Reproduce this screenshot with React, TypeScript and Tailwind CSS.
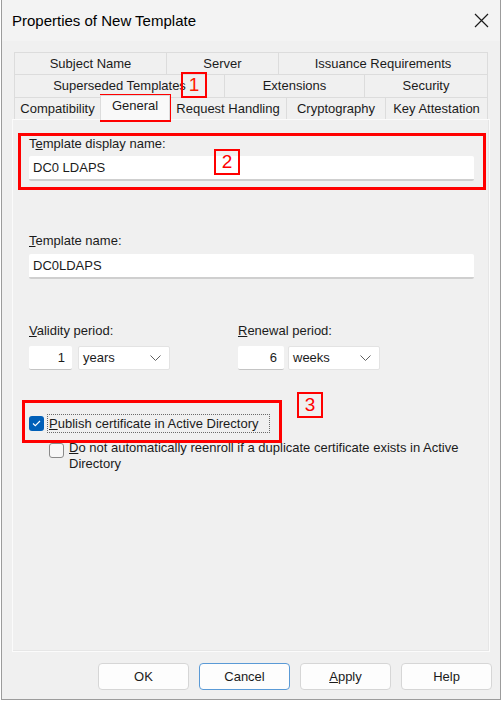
import React from "react";

const row1 = [
  { label: "Subject Name", w: "w-[153px]" },
  { label: "Server", w: "w-[112px]" },
  { label: "Issuance Requirements", w: "w-[209px]" },
];
const row2 = [
  { label: "Superseded Templates", w: "w-[211px]" },
  { label: "Extensions", w: "w-[140px]" },
  { label: "Security", w: "w-[123px]" },
];

function Chevron() {
  return (
    <svg width="11" height="7" viewBox="0 0 11 7" className="shrink-0">
      <polyline points="0.5,0.5 5.5,5.5 10.5,0.5" fill="none" stroke="#5f5f5f" strokeWidth="1" />
    </svg>
  );
}

function Spin({ value, w }: { value: string; w: string }) {
  return (
    <div className={`${w} h-[24px] bg-white rounded-[2px] border-b border-[#c4c4c4] flex items-center justify-end pr-[7px]`}>
      {value}
    </div>
  );
}

function Select({ value }: { value: string }) {
  return (
    <div className="w-[92px] h-[24px] bg-white rounded-[2px] border border-[#e3e3e3] flex items-center justify-between pl-[4px] pr-[8px]">
      <span>{value}</span>
      <Chevron />
    </div>
  );
}

function TextBox({ value }: { value: string }) {
  return (
    <div className="w-[445px] h-[25px] bg-white rounded-[2px] border-b-2 border-[#cfcfcf] flex items-center pl-[4px]">
      {value}
    </div>
  );
}

export default function App() {
  return (
    <div className="relative w-[502px] h-[702px] bg-white font-['Liberation_Sans',Arial,sans-serif] text-[13px] text-[#1b1b1b] leading-4">
      <div className="ml-px w-[500px] h-[700px] bg-[#f0f0f0] border-x border-b border-[#9c9c9c] flex flex-col">
        {/* Title bar */}
        <div className="h-[41px] flex items-center justify-between pl-[10px] pr-[11px] bg-[#f3f3f3]">
          <span className="text-[15px] text-black">Properties of New Template</span>
          <svg width="15" height="15" viewBox="0 0 15 15">
            <path d="M1 1 L14 14 M14 1 L1 14" stroke="#1a1a1a" strokeWidth="1.2" />
          </svg>
        </div>

        {/* Tabs */}
        <div className="mt-[11px] ml-[12px] w-[474px] flex flex-col">
          <div className="flex h-[22px]">
            {row1.map((t) => (
              <div key={t.label} className={`${t.w} border-t border-r first:border-l border-[#dcdcdc] flex items-center justify-center`}>
                {t.label}
              </div>
            ))}
          </div>
          <div className="flex h-[23px]">
            {row2.map((t) => (
              <div key={t.label} className={`${t.w} border-t border-r first:border-l border-[#dcdcdc] flex items-center justify-center`}>
                {t.label}
              </div>
            ))}
          </div>
          <div className="flex h-[22px] items-end">
            <div className="w-[86px] h-[22px] border-t border-l border-[#dcdcdc] flex items-center justify-center">Compatibility</div>
            <div className="w-[70px] h-[25px] -mb-px z-10 bg-[#f9f9f9] border-t border-x border-[#dcdcdc] flex items-start justify-center pt-[2px]">General</div>
            <div className="w-[117px] h-[22px] border-t border-r border-[#dcdcdc] flex items-center justify-center">Request Handling</div>
            <div className="w-[99px] h-[22px] border-t border-r border-[#dcdcdc] flex items-center justify-center">Cryptography</div>
            <div className="w-[102px] h-[22px] border-t border-r border-[#dcdcdc] flex items-center justify-center">Key Attestation</div>
          </div>
        </div>

        {/* Panel */}
        <div className="ml-[10px] w-[478px] h-[533px] border border-[#fbfbfb] shadow-[inset_-1px_-1px_0_#e6e6e6] pl-[16px] pt-[16px] flex flex-col">
          <div>
            T<span className="underline">e</span>mplate display name:
          </div>
          <div className="mt-[4px]">
            <TextBox value="DC0 LDAPS" />
          </div>

          <div className="mt-[52px]">
            <span className="underline">T</span>emplate name:
          </div>
          <div className="mt-[5px]">
            <TextBox value="DC0LDAPS" />
          </div>

          <div className="mt-[44px] flex">
            <div className="w-[209px] flex flex-col gap-[7px]">
              <div>
                <span className="underline">V</span>alidity period:
              </div>
              <div className="flex gap-[6px]">
                <Spin value="1" w="w-[43px]" />
                <Select value="years" />
              </div>
            </div>
            <div className="flex flex-col gap-[7px]">
              <div>
                <span className="underline">R</span>enewal period:
              </div>
              <div className="flex gap-[4px]">
                <Spin value="6" w="w-[46px]" />
                <Select value="weeks" />
              </div>
            </div>
          </div>

          <div className="mt-[44px] h-[19px] flex items-center">
            <div className="w-[15px] h-[15px] rounded-[3px] bg-[#005fb8] flex items-center justify-center">
              <svg width="9" height="7" viewBox="0 0 9 7">
                <polyline points="1,3.5 3.3,5.7 8,1" fill="none" stroke="white" strokeWidth="1.1" />
              </svg>
            </div>
            <div className="ml-[3px] h-[19px] w-[223px] border border-dotted border-[#6a6a6a] flex items-center pl-px">
              <span className="underline">P</span>ublish certificate in Active Directory
            </div>
          </div>

          <div className="mt-[7px] ml-[20px] flex">
            <div className="mt-[3px] w-[15px] h-[15px] rounded-[3px] border border-[#8a8a8a] bg-[#f7f7f7] shrink-0" />
            <div className="ml-[5px] w-[400px]">
              <span className="underline">D</span>o not automatically reenroll if a duplicate certificate exists in Active Directory
            </div>
          </div>
        </div>

        {/* Buttons */}
        <div className="mt-[11px] flex justify-end gap-[10px] pr-[8px]">
          <button className="w-[91px] h-[27px] bg-[#fdfdfd] border border-[#d6d6d6] rounded-[4px]">OK</button>
          <button className="w-[91px] h-[27px] bg-[#fdfdfd] border border-[#5a9ad6] rounded-[4px]">Cancel</button>
          <button className="w-[91px] h-[27px] bg-[#fdfdfd] border border-[#d6d6d6] rounded-[4px]">
            <span className="underline">A</span>pply
          </button>
          <button className="w-[91px] h-[27px] bg-[#fdfdfd] border border-[#d6d6d6] rounded-[4px]">Help</button>
        </div>
      </div>

      {/* Red annotations */}
      <div className="absolute left-[100px] top-[94px] w-[71px] h-[28px] border-[3px] border-[#ff0000]" />
      <div className="absolute left-[181px] top-[72px] w-[26px] h-[26px] border-2 border-[#ff0000] flex items-center justify-center text-[19px] text-[#ff1a00]">1</div>
      <div className="absolute left-[18px] top-[133px] w-[468px] h-[57px] border-[3px] border-[#ff0000]" />
      <div className="absolute left-[214px] top-[149px] w-[26px] h-[26px] border-2 border-[#ff0000] flex items-center justify-center text-[19px] text-[#ff0000]">2</div>
      <div className="absolute left-[22px] top-[400px] w-[260px] h-[43px] border-[3px] border-[#ff0000]" />
      <div className="absolute left-[297px] top-[392px] w-[26px] h-[26px] border-2 border-[#ff0000] flex items-center justify-center text-[19px] text-[#ff0000]">3</div>
    </div>
  );
}
